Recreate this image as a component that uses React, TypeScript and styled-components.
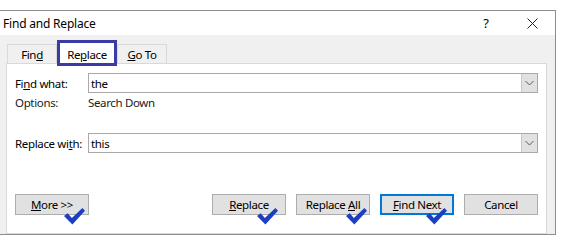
import * as React from 'react';
import styled, { createGlobalStyle } from 'styled-components';

const GlobalStyle = createGlobalStyle`
    body {
        margin: 0;
        background: #ffffff;
        font-family: 'Noto Sans', 'Liberation Sans', sans-serif;
        font-size: 11.5px;
        letter-spacing: -0.35px;
        color: #000000;
    }
`;

const Dialog = styled.div`
    margin-top: 10px;
    width: 555px;
    height: 223px;
    border: 1px solid #8e8e8e;
    border-left: none;
    background: #f0f0f0;
    display: flex;
    flex-direction: column;
    white-space: nowrap;
`;

const TitleBar = styled.div`
    height: 25px;
    background: #ffffff;
    display: flex;
    align-items: center;
    padding-left: 3px;
    font-size: 12px;
    letter-spacing: -0.2px;
`;

const TitleButtons = styled.div`
    margin-left: auto;
    display: flex;
    align-items: center;
`;

const HelpMark = styled.span`
    width: 46px;
    text-align: center;
    font-size: 13px;
`;

const CloseBox = styled.span`
    width: 46px;
    display: flex;
    justify-content: center;
`;

const Body = styled.div`
    padding: 5px 8px 0 6px;
`;

const TabRow = styled.div`
    display: flex;
    align-items: flex-end;
    height: 23px;
    padding-left: 1px;
`;

const Tab = styled.div<{ $active?: boolean; $width: number }>`
    position: relative;
    width: ${(p) => p.$width}px;
    height: ${(p) => (p.$active ? 26 : 19)}px;
    margin-bottom: ${(p) => (p.$active ? -3 : 0)}px;
    box-sizing: border-box;
    display: flex;
    align-items: ${(p) => (p.$active ? 'flex-start' : 'center')};
    padding-top: ${(p) => (p.$active ? 4 : 0)}px;
    justify-content: center;
    background: ${(p) => (p.$active ? '#ffffff' : '#f0f0f0')};
    border: ${(p) => (p.$active ? '3px solid #3b3ba6' : '1px solid #d9d9d9')};
    border-bottom: ${(p) => (p.$active ? '3px solid #3b3ba6' : 'none')};
    z-index: ${(p) => (p.$active ? 2 : 0)};
`;

const Panel = styled.div`
    position: relative;
    height: 160px;
    background: #ffffff;
    border: 1px solid #d9d9d9;
    padding: 9px 8px 0 8px;
    display: flex;
    flex-direction: column;
`;

const FieldRow = styled.div<{ $gap?: number }>`
    display: grid;
    grid-template-columns: 73px 1fr;
    align-items: center;
    margin-top: ${(p) => p.$gap ?? 0}px;
`;

const ComboBox = styled.div`
    height: 20px;
    box-sizing: border-box;
    border: 1px solid #a9a9a9;
    display: flex;
    align-items: center;
    padding-left: 2px;
    background: #ffffff;
`;

const ComboValue = styled.span`
    flex: 1;
`;

const DropButton = styled.span`
    width: 16px;
    height: 18px;
    box-sizing: border-box;
    background: #e1e1e1;
    border-left: 1px solid #c8c8c8;
    display: flex;
    align-items: center;
    justify-content: center;
`;

const OptionsText = styled.span`
    color: #1a1a1a;
`;

const ButtonRow = styled.div`
    display: flex;
    margin-top: 41px;
    gap: 10px;
`;

const ButtonWrap = styled.div<{ $push?: boolean }>`
    position: relative;
    margin-left: ${(p) => (p.$push ? 'auto' : '0')};
`;

const Button = styled.div<{ $default?: boolean }>`
    width: 74px;
    height: 21px;
    box-sizing: border-box;
    display: flex;
    align-items: center;
    justify-content: center;
    background: #e1e1e1;
    border: ${(p) => (p.$default ? '2px solid #0078d7' : '1px solid #adadad')};
`;

const CheckMark = styled.svg<{ $right: number }>`
    position: absolute;
    right: ${(p) => p.$right}px;
    top: 14px;
    z-index: 3;
`;

const Key = styled.u`
    text-decoration-thickness: 1px;
`;

function Check({ right }: { right: number }) {
    return (
        <CheckMark $right={right} width="21" height="17" viewBox="0 0 20 16">
            <path d="M0 7.5 L3.5 5 L7.5 9.5 L17.5 0 L20 2.5 L8 15.5 Z" fill="#1c3fc2" />
        </CheckMark>
    );
}

function Chevron() {
    return (
        <svg width="9" height="6" viewBox="0 0 9 6">
            <path d="M0.5 1 L4.5 5 L8.5 1" fill="none" stroke="#5a5a5a" strokeWidth="1" />
        </svg>
    );
}

export default function App() {
    return (
        <>
            <GlobalStyle />
            <Dialog>
                <TitleBar>
                    Find and Replace
                    <TitleButtons>
                        <HelpMark>?</HelpMark>
                        <CloseBox>
                            <svg width="11" height="11" viewBox="0 0 11 11">
                                <path d="M0.5 0.5 L10.5 10.5 M10.5 0.5 L0.5 10.5" stroke="#222" strokeWidth="1" />
                            </svg>
                        </CloseBox>
                    </TitleButtons>
                </TitleBar>
                <Body>
                    <TabRow>
                        <Tab $width={50}>
                            <span>Fin<Key>d</Key></span>
                        </Tab>
                        <Tab $active $width={60}>
                            <span>Re<Key>p</Key>lace</span>
                        </Tab>
                        <Tab $width={50}>
                            <span><Key>G</Key>o To</span>
                        </Tab>
                    </TabRow>
                    <Panel>
                        <FieldRow>
                            <span>Fi<Key>n</Key>d what:</span>
                            <ComboBox>
                                <ComboValue>the</ComboValue>
                                <DropButton><Chevron /></DropButton>
                            </ComboBox>
                        </FieldRow>
                        <FieldRow $gap={2}>
                            <OptionsText>Options:</OptionsText>
                            <OptionsText>Search Down</OptionsText>
                        </FieldRow>
                        <FieldRow $gap={23}>
                            <span>Replace wi<Key>t</Key>h:</span>
                            <ComboBox>
                                <ComboValue>this</ComboValue>
                                <DropButton><Chevron /></DropButton>
                            </ComboBox>
                        </FieldRow>
                        <ButtonRow>
                            <ButtonWrap>
                                <Button><span><Key>M</Key>ore &gt;&gt;</span></Button>
                                <Check right={4} />
                            </ButtonWrap>
                            <ButtonWrap $push>
                                <Button><span><Key>R</Key>eplace</span></Button>
                                <Check right={8} />
                            </ButtonWrap>
                            <ButtonWrap>
                                <Button><span>Replace <Key>A</Key>ll</span></Button>
                                <Check right={3} />
                            </ButtonWrap>
                            <ButtonWrap>
                                <Button $default><span><Key>F</Key>ind Next</span></Button>
                                <Check right={7} />
                            </ButtonWrap>
                            <ButtonWrap>
                                <Button><span>Cancel</span></Button>
                            </ButtonWrap>
                        </ButtonRow>
                    </Panel>
                </Body>
            </Dialog>
        </>
    );
}
